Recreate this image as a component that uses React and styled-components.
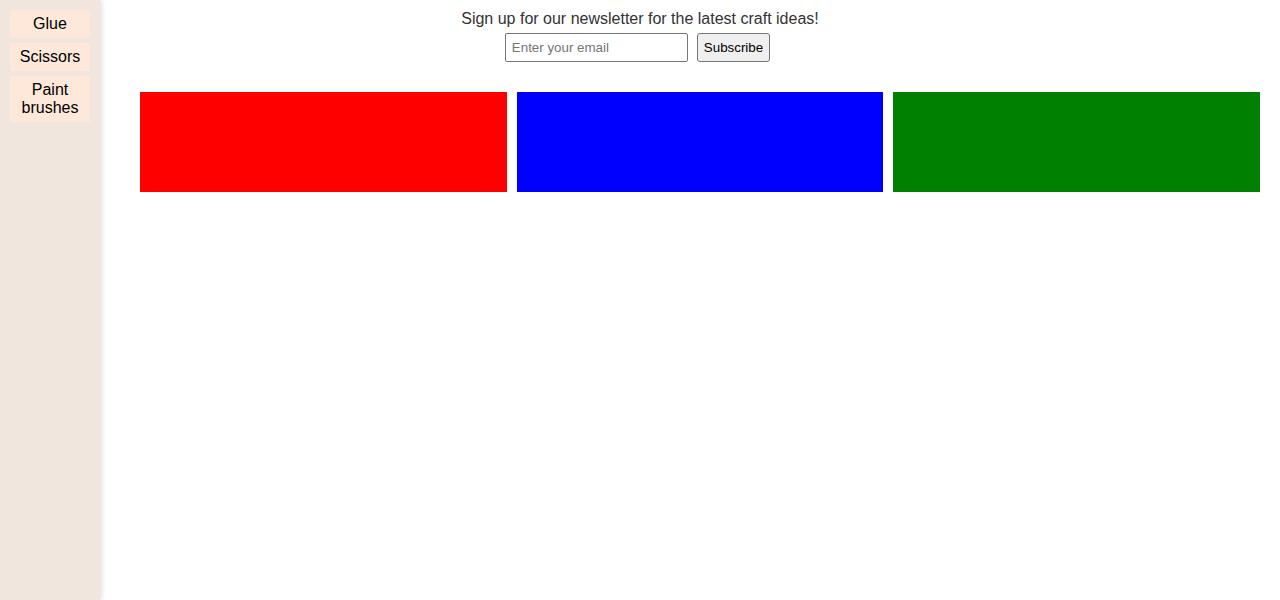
import React from "react";
import styled, { createGlobalStyle } from "styled-components";

const GlobalStyle = createGlobalStyle`
  body {
    margin: 0;
    font-family: "Liberation Sans", Arial, sans-serif;
    background: #fff;
  }
`;

const Page = styled.div`
  display: flex;
  min-height: 600px;
`;

const Sidebar = styled.nav`
  width: 100px;
  flex-shrink: 0;
  min-height: 100vh;
  background: #f0e6dd;
  box-shadow: 2px 0 5px rgba(0, 0, 0, 0.12);
  padding: 10px;
  box-sizing: border-box;
  display: flex;
  flex-direction: column;
  gap: 5px;
`;

const SideItem = styled.div`
  background: #fde8da;
  padding: 5px;
  text-align: center;
  font-size: 16px;
  line-height: 18px;
  color: #000;
`;

const Main = styled.main`
  flex: 1;
  display: flex;
  flex-direction: column;
`;

const Newsletter = styled.section`
  padding: 10px 100px 0 0;
  display: flex;
  flex-direction: column;
  align-items: center;
  gap: 5px;
`;

const Lead = styled.p`
  margin: 0;
  font-size: 16px;
  line-height: 18px;
  color: #333;
`;

const Form = styled.form`
  display: flex;
  gap: 9px;
  margin-right: 5px;
`;

const EmailInput = styled.input`
  width: 183px;
  height: 29px;
  box-sizing: border-box;
  padding: 5px 6px;
  border: 1px solid #767676;
  border-radius: 2px;
  font-family: "Liberation Sans", Arial, sans-serif;
  font-size: 13.33px;
  &::placeholder {
    color: #757575;
  }
`;

const SubmitButton = styled.button`
  height: 29px;
  box-sizing: border-box;
  padding: 5px 6px;
  border: 1px solid #767676;
  border-radius: 3px;
  background: #efefef;
  font-family: "Liberation Sans", Arial, sans-serif;
  font-size: 13.33px;
  color: #000;
`;

const Cards = styled.div`
  display: grid;
  grid-template-columns: repeat(3, 1fr);
  gap: 10px;
  padding: 30px 20px 0 40px;
`;

const Card = styled.div`
  height: 100px;
  background: ${(p) => p.color};
`;

const tools = ["Glue", "Scissors", "Paint brushes"];
const swatches = ["red", "blue", "green"];

export default function App() {
  return (
    <Page>
      <GlobalStyle />
      <Sidebar>
        {tools.map((t) => (
          <SideItem key={t}>{t}</SideItem>
        ))}
      </Sidebar>
      <Main>
        <Newsletter>
          <Lead>Sign up for our newsletter for the latest craft ideas!</Lead>
          <Form onSubmit={(e) => e.preventDefault()}>
            <EmailInput type="email" placeholder="Enter your email" />
            <SubmitButton type="submit">Subscribe</SubmitButton>
          </Form>
        </Newsletter>
        <Cards>
          {swatches.map((c) => (
            <Card key={c} color={c} />
          ))}
        </Cards>
      </Main>
    </Page>
  );
}
